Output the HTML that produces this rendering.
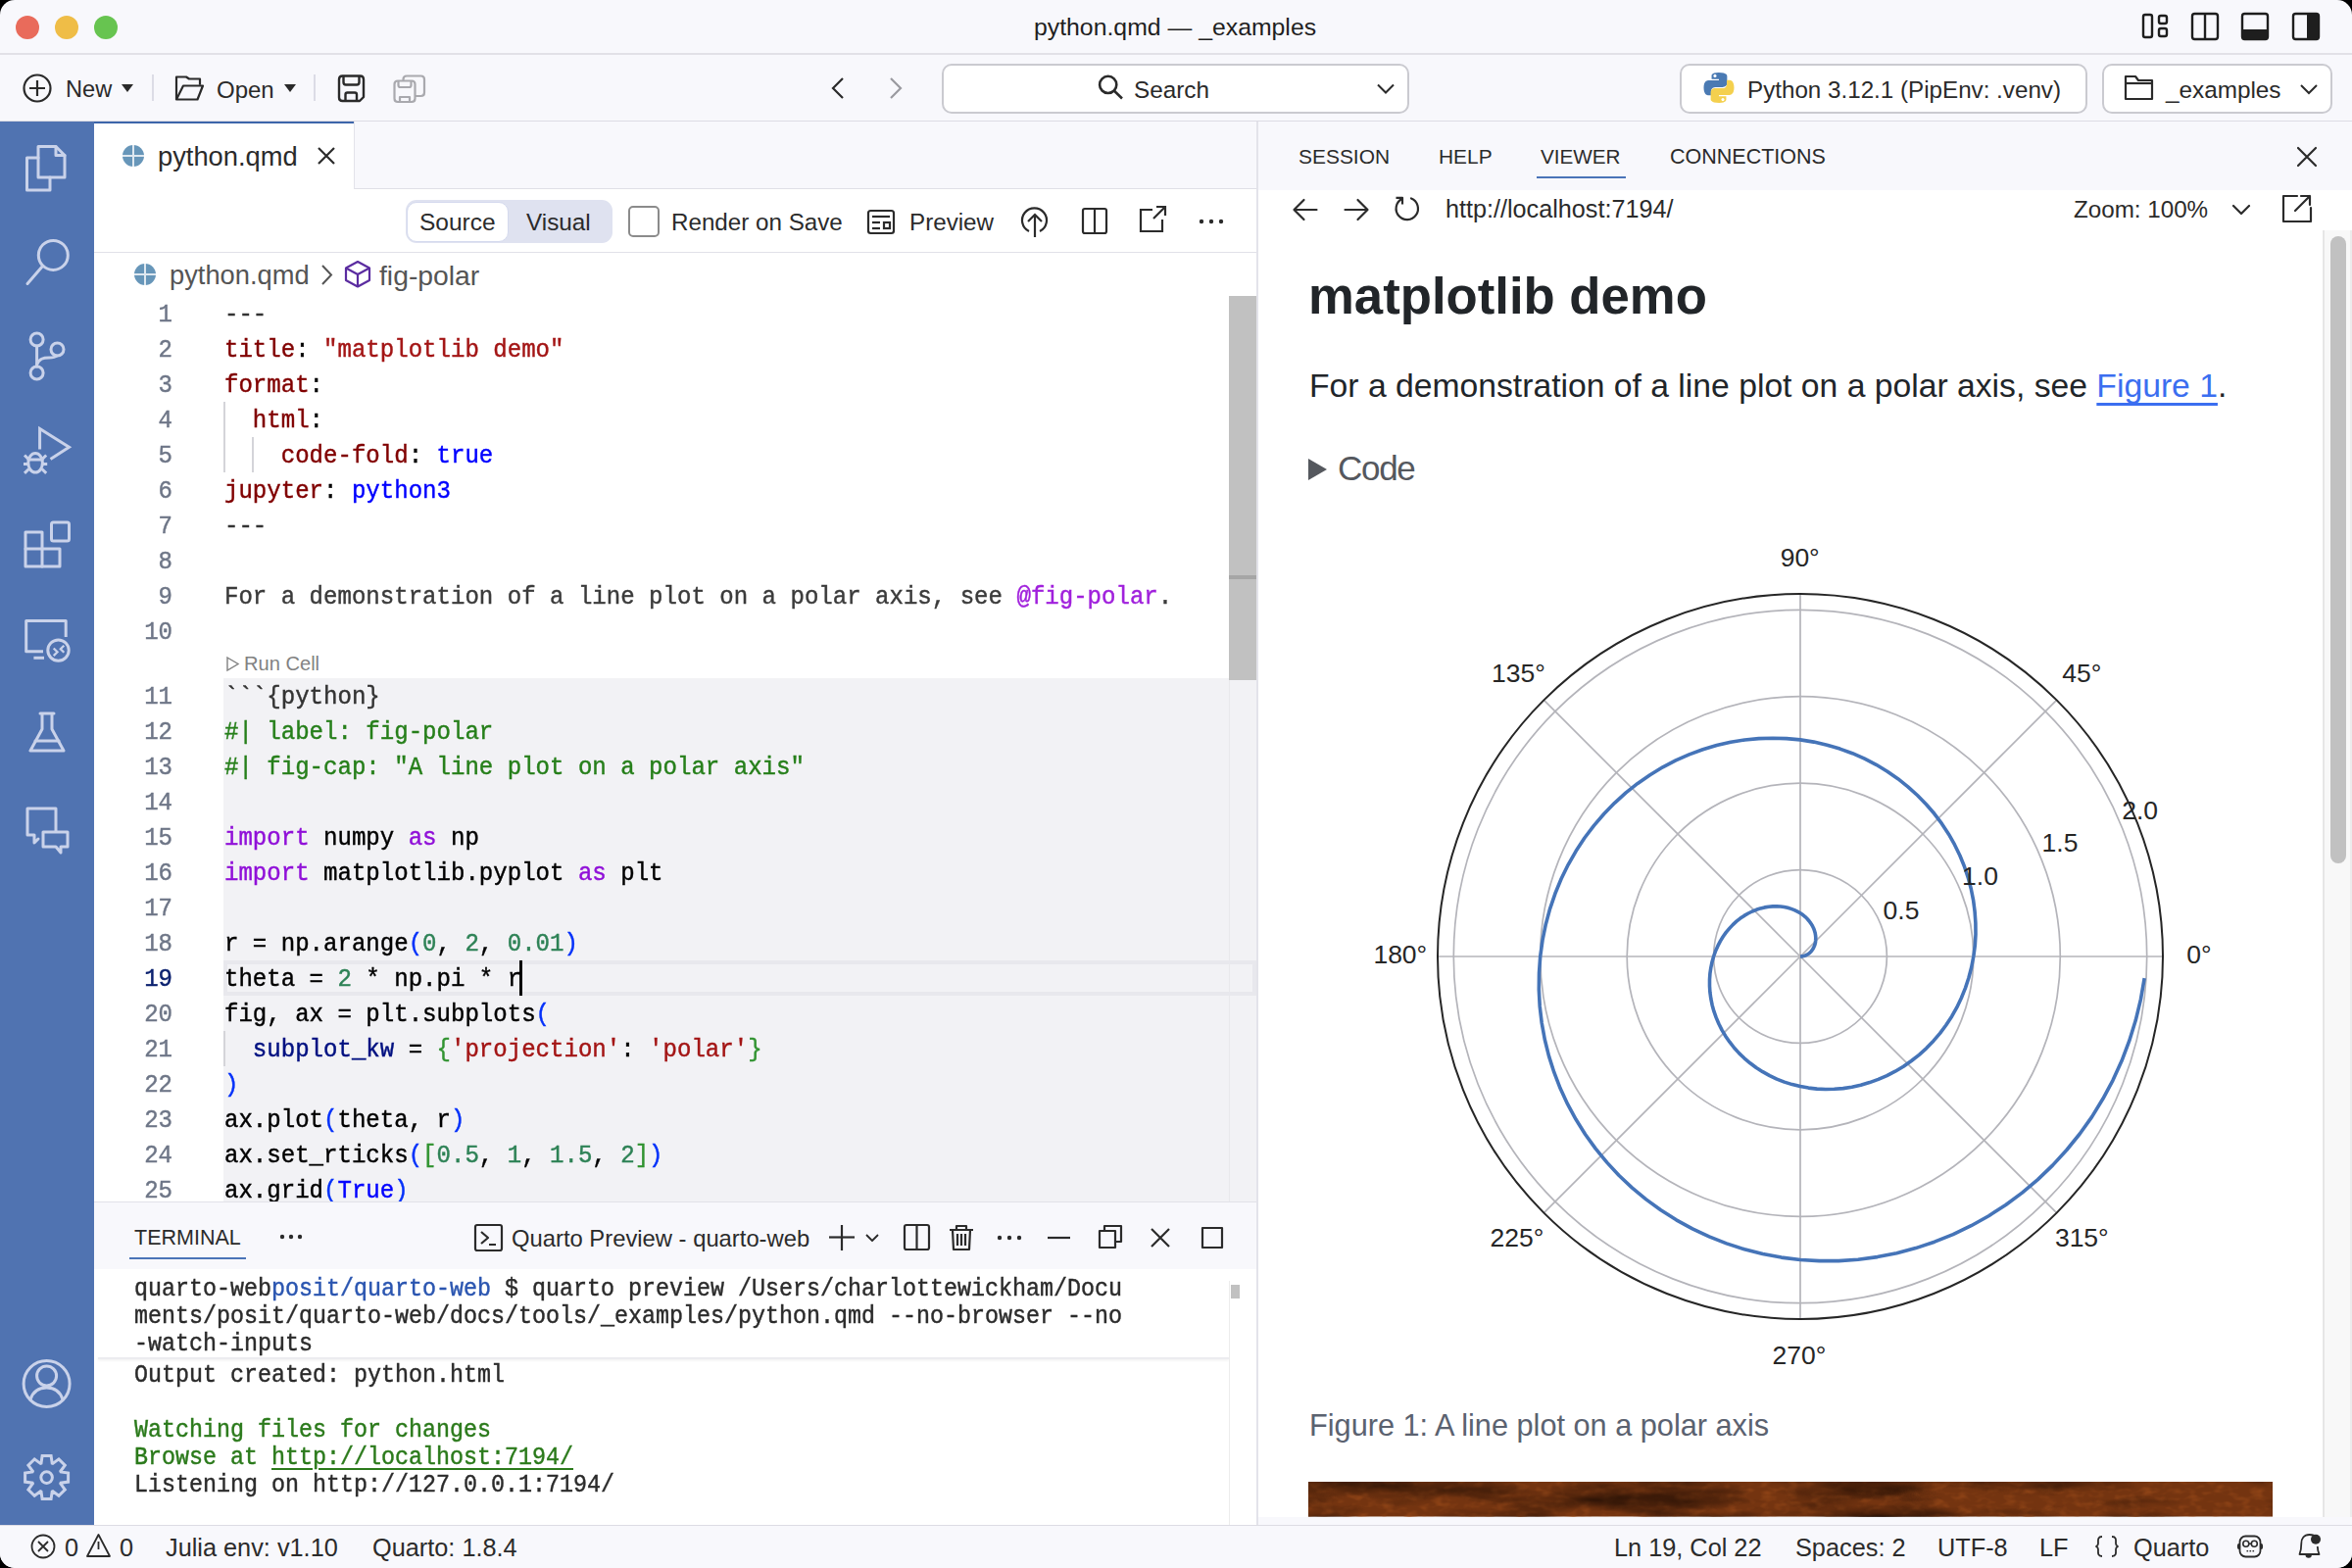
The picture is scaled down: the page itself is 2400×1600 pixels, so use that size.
<!DOCTYPE html><html><head><meta charset="utf-8"><style>
html,body{margin:0;padding:0;}
body{width:2400px;height:1600px;background:#000;position:relative;overflow:hidden;font-family:"Liberation Sans", sans-serif;}
#win{position:absolute;left:0;top:0;width:2400px;height:1600px;border-radius:15px;overflow:hidden;background:#f8f8fc;}
.a{position:absolute;}
.t{position:absolute;white-space:pre;line-height:1;}
svg{position:absolute;overflow:visible;}
.mono{font-family:"Liberation Mono", monospace;-webkit-text-stroke:0.45px currentColor;}
</style></head><body><div id="win">

<div class="a" style="left:0;top:54px;width:2400px;height:2px;background:#e2e1e7"></div>
<div class="a" style="left:16px;top:16px;width:24px;height:24px;border-radius:50%;background:#e96b5b"></div>
<div class="a" style="left:56px;top:16px;width:24px;height:24px;border-radius:50%;background:#efbd47"></div>
<div class="a" style="left:96px;top:16px;width:24px;height:24px;border-radius:50%;background:#67c450"></div>
<div class="t" style="left:1055px;top:16px;font-size:24.8px;color:#1f1f1f">python.qmd — _examples</div>
<svg style="left:0;top:0" width="2400" height="60">
<g fill="none" stroke="#1e1e1e" stroke-width="2.4">
<rect x="2187" y="15" width="9" height="23" rx="2"/><rect x="2203" y="16" width="8" height="8" rx="2"/><rect x="2203" y="29" width="8" height="8" rx="2"/>
<rect x="2237" y="14" width="26" height="26" rx="2.5"/><line x1="2250" y1="14" x2="2250" y2="40"/>
<rect x="2288" y="14" width="26" height="26" rx="2.5"/>
<rect x="2340" y="14" width="26" height="26" rx="2.5"/>
</g>
<rect x="2288" y="30" width="26" height="10" fill="#1e1e1e"/>
<rect x="2354" y="14" width="12" height="26" fill="#1e1e1e"/>
</svg>
<div class="a" style="left:0;top:123px;width:2400px;height:1px;background:#dddce4"></div>
<svg style="left:0;top:55px" width="2400" height="68">
<g fill="none" stroke="#2a2a2a" stroke-width="2.2">
<circle cx="38" cy="35" r="13.5"/><line x1="30" y1="35" x2="46" y2="35"/><line x1="38" y1="27" x2="38" y2="43"/>
</g>
<path d="M124 31 L136 31 L130 39 Z" fill="#2a2a2a"/>
<rect x="155" y="21" width="2" height="27" fill="#dcdce6"/>
<g fill="none" stroke="#2a2a2a" stroke-width="2.2" stroke-linejoin="round">
<path d="M180 46.5 L180 23.5 L190 23.5 L193 25.5 L204 25.5 L204 31.8"/><path d="M180 46.5 L187 32.5 L207 32.5 L201.5 46.5 Z"/>
</g>
<path d="M290 31 L302 31 L296 39 Z" fill="#2a2a2a"/>
<rect x="320" y="21" width="2" height="27" fill="#dcdce6"/>
<g fill="none" stroke="#2a2a2a" stroke-width="2.4" stroke-linejoin="round">
<path d="M349.5 22.5 L367.5 22.5 Q371 22.5 371 26 L371 44 L367 48 L349.5 48 Q346 48 346 44.5 L346 26 Q346 22.5 349.5 22.5 Z"/>
<path d="M350.5 22.5 L350.5 29 Q350.5 31.5 353 31.5 L364 31.5 Q366.5 31.5 366.5 29 L366.5 22.5"/>
<path d="M352.5 48 L352.5 41.5 Q352.5 39.5 354.5 39.5 L362 39.5 Q364 39.5 364 41.5 L364 48"/>
</g>
<g fill="none" stroke="#a9a9ae" stroke-width="2.2" stroke-linejoin="round">
<path d="M406 27.5 L420 27.5 Q423.5 27.5 423.5 31 L423.5 45.5 Q423.5 49 420 49 L406 49 Q402.5 49 402.5 45.5 L402.5 31 Q402.5 27.5 406 27.5 Z"/>
<path d="M406.5 27.5 L406.5 32 Q406.5 34 408.5 34 L417.5 34 Q419.5 34 419.5 32 L419.5 27.5"/><path d="M408 49 L408 44 L418 44 L418 49"/>
<path d="M411.5 27.5 L411.5 26 Q411.5 22.5 415 22.5 L429.5 22.5 Q433 22.5 433 26 L433 39.5 Q433 43 429.5 43 L423.5 43"/>
</g>
<g fill="none" stroke="#2a2a2a" stroke-width="2.2"><path d="M860 25 L850 35 L860 45"/></g>
<g fill="none" stroke="#9a9aa0" stroke-width="2.2"><path d="M909 25 L919 35 L909 45"/></g>
</svg>
<div class="t" style="left:67px;top:80px;font-size:23.6px;color:#2a2a2a">New</div>
<div class="t" style="left:221px;top:80px;font-size:24px;color:#2a2a2a">Open</div>
<div class="a" style="left:961px;top:64.5px;width:477px;height:51px;border:2px solid #cacad0;border-radius:10px;background:#fff;box-sizing:border-box"></div>
<div class="t" style="left:1157px;top:80px;font-size:24.3px;color:#2a2a2a">Search</div>
<div class="a" style="left:1714px;top:64.5px;width:416px;height:51px;border:2px solid #cacad0;border-radius:10px;background:#fff;box-sizing:border-box"></div>
<div class="t" style="left:1783px;top:80px;font-size:24.2px;color:#2a2a2a">Python 3.12.1 (PipEnv: .venv)</div>
<div class="a" style="left:2145px;top:64.5px;width:235px;height:51px;border:2px solid #cacad0;border-radius:10px;background:#fff;box-sizing:border-box"></div>
<div class="t" style="left:2210px;top:80px;font-size:24.3px;color:#2a2a2a">_examples</div>
<svg style="left:0;top:55px" width="2400" height="68">
<g fill="none" stroke="#2a2a2a" stroke-width="2.6"><circle cx="1130.7" cy="31.4" r="8.6"/><line x1="1137" y1="37.8" x2="1145" y2="45.5"/></g>
<g fill="none" stroke="#2a2a2a" stroke-width="2"><path d="M1406 31.5 L1414 39.5 L1422 31.5"/></g>
<g transform="translate(1738.5 19) scale(0.31)">
<path d="M49 0 C24 0 26 11 26 11 L26 22 L50 22 L50 26 L17 26 C17 26 0 24 0 50 C0 76 15 75 15 75 L24 75 L24 63 C24 63 23 48 39 48 L63 48 C63 48 77 48 77 34 L77 12 C77 12 79 0 49 0 Z" fill="#4a7ab3"/>
<path d="M51 100 C76 100 74 89 74 89 L74 78 L50 78 L50 74 L83 74 C83 74 100 76 100 50 C100 24 85 25 85 25 L76 25 L76 37 C76 37 77 52 61 52 L37 52 C37 52 23 52 23 66 L23 88 C23 88 21 100 51 100 Z" fill="#f4d04e"/>
<circle cx="37" cy="11" r="5" fill="#fff"/><circle cx="63" cy="89" r="5" fill="#fff"/>
</g>
<g fill="none" stroke="#2a2a2a" stroke-width="2.2" stroke-linejoin="round">
<path d="M2169 24 L2169 46 L2196 46 L2196 27 L2182 27 L2179 23 L2169 23 Z"/><line x1="2169" y1="30" x2="2196" y2="30"/>
</g>
<g fill="none" stroke="#2a2a2a" stroke-width="2"><path d="M2348 32 L2356 40 L2364 32"/></g>
</svg>
<div class="a" style="left:0;top:124px;width:96px;height:1432px;background:#5073b1"></div>
<svg style="left:0;top:0" width="96" height="1600">
<g fill="none" stroke="#c9d2ea" stroke-width="3" stroke-linejoin="round" stroke-linecap="round">
<path d="M39 149.5 L57 149.5 L66 158.5 L66 181 L39 181 Z"/><path d="M57 149.5 L57 158.5 L66 158.5"/><path d="M39 161 L27.5 161 L27.5 194 L51 194 L51 181"/>
<circle cx="54.3" cy="260.4" r="15"/><line x1="43.5" y1="271.5" x2="28" y2="289.5"/>
<circle cx="37.6" cy="346.5" r="6.5"/><circle cx="37.6" cy="380.5" r="6.5"/><circle cx="58.5" cy="356.5" r="6.5"/>
<line x1="37.6" y1="353" x2="37.6" y2="374"/><path d="M37.6 372 C40 366 44 365 50 365 C55 365 57 364 58 363"/>
<path d="M40.6 458.5 L40.6 437.5 L70.5 456.3 L51.5 468.5" stroke-linecap="butt" stroke-linejoin="miter"/>
<ellipse cx="36.1" cy="472.3" rx="7.3" ry="9.8"/><line x1="29" y1="469" x2="43.2" y2="469"/><path d="M24 473.5 L28.5 473.5 M43.7 473.5 L48.2 473.5 M25 464.5 L29 468.3 M47.2 464.5 L43.2 468.3 M25 482.8 L29.5 478.5 M47.2 482.8 L42.7 478.5" stroke-linecap="butt"/>
<path d="M26 543 L43 543 L43 560 L61 560 L61 578 L26 578 Z"/><line x1="26" y1="560" x2="43" y2="560"/><line x1="43" y1="560" x2="43" y2="578"/><rect x="52.5" y="533" width="18" height="19" rx="2"/>
<path d="M67.2 650 L67.2 633.6 L26.7 633.6 L26.7 664.8 L44 664.8" stroke-linecap="butt"/><line x1="34.4" y1="671.3" x2="45" y2="671.3" stroke-linecap="butt"/><circle cx="59.5" cy="663.6" r="10.7"/><path d="M54.7 661.5 L58.5 665.3 L54.7 669.1 M65.3 658.7 L61.8 662.2 L65.3 665.7" stroke-width="2.3" stroke-linejoin="miter" stroke-linecap="butt"/>
<path d="M41 728 L55 728 M43 728 L43 744 L31 766 L65 766 L53 744 L53 728"/><line x1="36" y1="756" x2="60" y2="756"/>
<path d="M57 848 L57 825 L28 825 L28 852 L35 852 L35 860 L39 856"/><path d="M44 849 L69 849 L69 864 L62 864 L62 870 L57 864 L44 864 Z"/>
<circle cx="47.6" cy="1412" r="23.5"/><circle cx="47.6" cy="1404" r="10"/><path d="M31 1428 C34 1419 40 1416 47.6 1416 C55 1416 61 1419 64 1428"/>
</g>
<g transform="translate(47.6 1507.6)" fill="none" stroke="#c9d2ea" stroke-width="3" stroke-linejoin="round">
<path d="M5.6 -14.5 L4.5 -22.0 L-4.5 -22.0 L-5.6 -14.5 L-6.3 -14.2 L-12.4 -18.7 L-18.7 -12.4 L-14.2 -6.3 L-14.5 -5.6 L-22.0 -4.5 L-22.0 4.5 L-14.5 5.6 L-14.2 6.3 L-18.7 12.4 L-12.4 18.7 L-6.3 14.2 L-5.6 14.5 L-4.5 22.0 L4.5 22.0 L5.6 14.5 L6.3 14.2 L12.4 18.7 L18.7 12.4 L14.2 6.3 L14.5 5.6 L22.0 4.5 L22.0 -4.5 L14.5 -5.6 L14.2 -6.3 L18.7 -12.4 L12.4 -18.7 L6.3 -14.2 Z" stroke-linejoin="miter"/><circle cx="0" cy="0" r="5.8"/>
</g>
</svg>
<div class="a" style="left:96px;top:124px;width:1186px;height:69px;background:#f8f8fc"></div>
<div class="a" style="left:96px;top:192px;width:1186px;height:1px;background:#e0e0e7"></div>
<div class="a" style="left:96px;top:124px;width:265px;height:69px;background:#fff"></div>
<div class="a" style="left:96px;top:124px;width:265px;height:2px;background:#3d66aa"></div>
<div class="a" style="left:361px;top:124px;width:1px;height:69px;background:#e3e3ea"></div>
<div class="t" style="left:161px;top:146px;font-size:27.3px;color:#2b2b2b">python.qmd</div>
<div class="a" style="left:96px;top:258px;width:1186px;height:968px;background:#fff"></div>
<div class="a" style="left:96px;top:193px;width:1186px;height:64px;background:#fff"></div>
<div class="a" style="left:96px;top:257px;width:1186px;height:1px;background:#e1e1e8"></div>
<div class="a" style="left:414px;top:204px;width:211px;height:44px;border-radius:11px;background:#dfe2f0"></div>
<div class="a" style="left:415px;top:206px;width:104px;height:41px;border-radius:10px;background:#fff;border:1.5px solid #d5daee;box-sizing:border-box"></div>
<div class="t" style="left:428px;top:215px;font-size:24.5px;color:#2b2b2b">Source</div>
<div class="t" style="left:537px;top:215px;font-size:24.3px;color:#2b2b2b">Visual</div>
<div class="a" style="left:641px;top:210px;width:32px;height:32px;border-radius:5px;border:2px solid #8b8b8b;box-sizing:border-box;background:#fff"></div>
<div class="t" style="left:685px;top:215px;font-size:24.2px;color:#2b2b2b">Render on Save</div>
<div class="t" style="left:928px;top:215px;font-size:24.2px;color:#2b2b2b">Preview</div>
<svg style="left:0;top:0" width="1290" height="320">
<g fill="none" stroke="#2b2b2b" stroke-width="2.2">
<path d="M325 151 L341 167 M341 151 L325 167"/>
<rect x="886" y="215" width="26" height="23" rx="2.5"/><line x1="890" y1="221" x2="908" y2="221"/><line x1="890" y1="227" x2="898" y2="227"/><line x1="890" y1="233" x2="898" y2="233"/><rect x="902" y="227" width="6" height="6"/>
<path d="M1050 236 A12.5 12.5 0 1 1 1061 236"/><line x1="1056" y1="242" x2="1056" y2="219"/><path d="M1049 226 L1056 219 L1063 226"/>
<rect x="1105" y="213" width="24" height="25" rx="2"/><line x1="1117" y1="213" x2="1117" y2="238"/>
<path d="M1176 214 L1164 214 L1164 236 L1186 236 L1186 224"/><path d="M1177 223 L1189 211 M1180 211 L1189 211 L1189 220"/>
</g>
<g fill="#2b2b2b"><circle cx="1226" cy="226" r="2.2"/><circle cx="1236" cy="226" r="2.2"/><circle cx="1246" cy="226" r="2.2"/></g>
<circle cx="136" cy="159" r="11" fill="#6796b9"/><path d="M125 159 L147 159 M136 148 L136 170" stroke="#dfe8f0" stroke-width="2"/>
<circle cx="148" cy="280" r="11" fill="#6796b9"/><path d="M137 280 L159 280 M148 269 L148 291" stroke="#dfe8f0" stroke-width="2"/>
<path d="M329 271 L338 280.5 L329 290" fill="none" stroke="#555" stroke-width="2"/>
<g fill="none" stroke="#5b2ca0" stroke-width="2.2" stroke-linejoin="round"><path d="M365 267 L377 273.5 L377 286 L365 292.5 L353 286 L353 273.5 Z"/><path d="M353 273.5 L365 280 L377 273.5 M365 280 L365 292.5"/></g>
</svg>
<div class="t" style="left:173px;top:267px;font-size:27.3px;color:#555">python.qmd</div>
<div class="t" style="left:387px;top:267px;font-size:28.3px;color:#555">fig-polar</div>
<div class="a" style="left:228px;top:692px;width:1054px;height:534px;background:#f2f2f5"></div>
<div class="a" style="left:1254px;top:694px;width:1px;height:532px;background:#e9e9ec"></div>
<div class="a" style="left:228px;top:980px;width:1054px;height:36px;border:4px solid #e8e8ed;box-sizing:border-box"></div>
<div class="a" style="left:1254px;top:302px;width:28px;height:392px;background:#c1c1c1"></div>
<div class="a" style="left:1254px;top:587px;width:28px;height:4px;background:#a6a6a6"></div>
<div class="t mono" style="left:96px;width:80px;text-align:right;top:303px;height:36px;line-height:36px;font-size:26.3px;transform:scaleX(0.9148);transform-origin:100% 0;color:#6e7687">1</div>
<div class="t mono" style="left:229px;top:303px;height:36px;line-height:36px;font-size:26.3px;transform:scaleX(0.9148);transform-origin:0 0"><span style="color:#333333">---</span></div>
<div class="t mono" style="left:96px;width:80px;text-align:right;top:339px;height:36px;line-height:36px;font-size:26.3px;transform:scaleX(0.9148);transform-origin:100% 0;color:#6e7687">2</div>
<div class="t mono" style="left:229px;top:339px;height:36px;line-height:36px;font-size:26.3px;transform:scaleX(0.9148);transform-origin:0 0"><span style="color:#800000">title</span><span style="color:#000000">: </span><span style="color:#a31515">&quot;matplotlib demo&quot;</span></div>
<div class="t mono" style="left:96px;width:80px;text-align:right;top:375px;height:36px;line-height:36px;font-size:26.3px;transform:scaleX(0.9148);transform-origin:100% 0;color:#6e7687">3</div>
<div class="t mono" style="left:229px;top:375px;height:36px;line-height:36px;font-size:26.3px;transform:scaleX(0.9148);transform-origin:0 0"><span style="color:#800000">format</span><span style="color:#000000">:</span></div>
<div class="t mono" style="left:96px;width:80px;text-align:right;top:411px;height:36px;line-height:36px;font-size:26.3px;transform:scaleX(0.9148);transform-origin:100% 0;color:#6e7687">4</div>
<div class="t mono" style="left:229px;top:411px;height:36px;line-height:36px;font-size:26.3px;transform:scaleX(0.9148);transform-origin:0 0"><span style="color:#800000">  html</span><span style="color:#000000">:</span></div>
<div class="t mono" style="left:96px;width:80px;text-align:right;top:447px;height:36px;line-height:36px;font-size:26.3px;transform:scaleX(0.9148);transform-origin:100% 0;color:#6e7687">5</div>
<div class="t mono" style="left:229px;top:447px;height:36px;line-height:36px;font-size:26.3px;transform:scaleX(0.9148);transform-origin:0 0"><span style="color:#800000">    code-fold</span><span style="color:#000000">: </span><span style="color:#0000ff">true</span></div>
<div class="t mono" style="left:96px;width:80px;text-align:right;top:483px;height:36px;line-height:36px;font-size:26.3px;transform:scaleX(0.9148);transform-origin:100% 0;color:#6e7687">6</div>
<div class="t mono" style="left:229px;top:483px;height:36px;line-height:36px;font-size:26.3px;transform:scaleX(0.9148);transform-origin:0 0"><span style="color:#800000">jupyter</span><span style="color:#000000">: </span><span style="color:#0000ff">python3</span></div>
<div class="t mono" style="left:96px;width:80px;text-align:right;top:519px;height:36px;line-height:36px;font-size:26.3px;transform:scaleX(0.9148);transform-origin:100% 0;color:#6e7687">7</div>
<div class="t mono" style="left:229px;top:519px;height:36px;line-height:36px;font-size:26.3px;transform:scaleX(0.9148);transform-origin:0 0"><span style="color:#333333">---</span></div>
<div class="t mono" style="left:96px;width:80px;text-align:right;top:555px;height:36px;line-height:36px;font-size:26.3px;transform:scaleX(0.9148);transform-origin:100% 0;color:#6e7687">8</div>
<div class="t mono" style="left:229px;top:555px;height:36px;line-height:36px;font-size:26.3px;transform:scaleX(0.9148);transform-origin:0 0"></div>
<div class="t mono" style="left:96px;width:80px;text-align:right;top:591px;height:36px;line-height:36px;font-size:26.3px;transform:scaleX(0.9148);transform-origin:100% 0;color:#6e7687">9</div>
<div class="t mono" style="left:229px;top:591px;height:36px;line-height:36px;font-size:26.3px;transform:scaleX(0.9148);transform-origin:0 0"><span style="color:#3b3b3b">For a demonstration of a line plot on a polar axis, see </span><span style="color:#a020dc">@fig-polar</span><span style="color:#3b3b3b">.</span></div>
<div class="t mono" style="left:96px;width:80px;text-align:right;top:627px;height:36px;line-height:36px;font-size:26.3px;transform:scaleX(0.9148);transform-origin:100% 0;color:#6e7687">10</div>
<div class="t mono" style="left:229px;top:627px;height:36px;line-height:36px;font-size:26.3px;transform:scaleX(0.9148);transform-origin:0 0"></div>
<div class="t mono" style="left:96px;width:80px;text-align:right;top:693px;height:36px;line-height:36px;font-size:26.3px;transform:scaleX(0.9148);transform-origin:100% 0;color:#6e7687">11</div>
<div class="t mono" style="left:229px;top:693px;height:36px;line-height:36px;font-size:26.3px;transform:scaleX(0.9148);transform-origin:0 0"><span style="color:#333333">```{python}</span></div>
<div class="t mono" style="left:96px;width:80px;text-align:right;top:729px;height:36px;line-height:36px;font-size:26.3px;transform:scaleX(0.9148);transform-origin:100% 0;color:#6e7687">12</div>
<div class="t mono" style="left:229px;top:729px;height:36px;line-height:36px;font-size:26.3px;transform:scaleX(0.9148);transform-origin:0 0"><span style="color:#267f1a">#| label: fig-polar</span></div>
<div class="t mono" style="left:96px;width:80px;text-align:right;top:765px;height:36px;line-height:36px;font-size:26.3px;transform:scaleX(0.9148);transform-origin:100% 0;color:#6e7687">13</div>
<div class="t mono" style="left:229px;top:765px;height:36px;line-height:36px;font-size:26.3px;transform:scaleX(0.9148);transform-origin:0 0"><span style="color:#267f1a">#| fig-cap: &quot;A line plot on a polar axis&quot;</span></div>
<div class="t mono" style="left:96px;width:80px;text-align:right;top:801px;height:36px;line-height:36px;font-size:26.3px;transform:scaleX(0.9148);transform-origin:100% 0;color:#6e7687">14</div>
<div class="t mono" style="left:229px;top:801px;height:36px;line-height:36px;font-size:26.3px;transform:scaleX(0.9148);transform-origin:0 0"></div>
<div class="t mono" style="left:96px;width:80px;text-align:right;top:837px;height:36px;line-height:36px;font-size:26.3px;transform:scaleX(0.9148);transform-origin:100% 0;color:#6e7687">15</div>
<div class="t mono" style="left:229px;top:837px;height:36px;line-height:36px;font-size:26.3px;transform:scaleX(0.9148);transform-origin:0 0"><span style="color:#9010d8">import</span><span style="color:#000000"> numpy </span><span style="color:#9010d8">as</span><span style="color:#000000"> np</span></div>
<div class="t mono" style="left:96px;width:80px;text-align:right;top:873px;height:36px;line-height:36px;font-size:26.3px;transform:scaleX(0.9148);transform-origin:100% 0;color:#6e7687">16</div>
<div class="t mono" style="left:229px;top:873px;height:36px;line-height:36px;font-size:26.3px;transform:scaleX(0.9148);transform-origin:0 0"><span style="color:#9010d8">import</span><span style="color:#000000"> matplotlib.pyplot </span><span style="color:#9010d8">as</span><span style="color:#000000"> plt</span></div>
<div class="t mono" style="left:96px;width:80px;text-align:right;top:909px;height:36px;line-height:36px;font-size:26.3px;transform:scaleX(0.9148);transform-origin:100% 0;color:#6e7687">17</div>
<div class="t mono" style="left:229px;top:909px;height:36px;line-height:36px;font-size:26.3px;transform:scaleX(0.9148);transform-origin:0 0"></div>
<div class="t mono" style="left:96px;width:80px;text-align:right;top:945px;height:36px;line-height:36px;font-size:26.3px;transform:scaleX(0.9148);transform-origin:100% 0;color:#6e7687">18</div>
<div class="t mono" style="left:229px;top:945px;height:36px;line-height:36px;font-size:26.3px;transform:scaleX(0.9148);transform-origin:0 0"><span style="color:#000000">r = np.arange</span><span style="color:#0431fa">(</span><span style="color:#2e8256">0</span><span style="color:#000000">, </span><span style="color:#2e8256">2</span><span style="color:#000000">, </span><span style="color:#2e8256">0.01</span><span style="color:#0431fa">)</span></div>
<div class="t mono" style="left:96px;width:80px;text-align:right;top:981px;height:36px;line-height:36px;font-size:26.3px;transform:scaleX(0.9148);transform-origin:100% 0;color:#0b216f">19</div>
<div class="t mono" style="left:229px;top:981px;height:36px;line-height:36px;font-size:26.3px;transform:scaleX(0.9148);transform-origin:0 0"><span style="color:#000000">theta = </span><span style="color:#2e8256">2</span><span style="color:#000000"> * np.pi * r</span></div>
<div class="t mono" style="left:96px;width:80px;text-align:right;top:1017px;height:36px;line-height:36px;font-size:26.3px;transform:scaleX(0.9148);transform-origin:100% 0;color:#6e7687">20</div>
<div class="t mono" style="left:229px;top:1017px;height:36px;line-height:36px;font-size:26.3px;transform:scaleX(0.9148);transform-origin:0 0"><span style="color:#000000">fig, ax = plt.subplots</span><span style="color:#0431fa">(</span></div>
<div class="t mono" style="left:96px;width:80px;text-align:right;top:1053px;height:36px;line-height:36px;font-size:26.3px;transform:scaleX(0.9148);transform-origin:100% 0;color:#6e7687">21</div>
<div class="t mono" style="left:229px;top:1053px;height:36px;line-height:36px;font-size:26.3px;transform:scaleX(0.9148);transform-origin:0 0"><span style="color:#000000">  </span><span style="color:#001080">subplot_kw</span><span style="color:#000000"> = </span><span style="color:#319331">{</span><span style="color:#a31515">&#x27;projection&#x27;</span><span style="color:#000000">: </span><span style="color:#a31515">&#x27;polar&#x27;</span><span style="color:#319331">}</span></div>
<div class="t mono" style="left:96px;width:80px;text-align:right;top:1089px;height:36px;line-height:36px;font-size:26.3px;transform:scaleX(0.9148);transform-origin:100% 0;color:#6e7687">22</div>
<div class="t mono" style="left:229px;top:1089px;height:36px;line-height:36px;font-size:26.3px;transform:scaleX(0.9148);transform-origin:0 0"><span style="color:#0431fa">)</span></div>
<div class="t mono" style="left:96px;width:80px;text-align:right;top:1125px;height:36px;line-height:36px;font-size:26.3px;transform:scaleX(0.9148);transform-origin:100% 0;color:#6e7687">23</div>
<div class="t mono" style="left:229px;top:1125px;height:36px;line-height:36px;font-size:26.3px;transform:scaleX(0.9148);transform-origin:0 0"><span style="color:#000000">ax.plot</span><span style="color:#0431fa">(</span><span style="color:#000000">theta, r</span><span style="color:#0431fa">)</span></div>
<div class="t mono" style="left:96px;width:80px;text-align:right;top:1161px;height:36px;line-height:36px;font-size:26.3px;transform:scaleX(0.9148);transform-origin:100% 0;color:#6e7687">24</div>
<div class="t mono" style="left:229px;top:1161px;height:36px;line-height:36px;font-size:26.3px;transform:scaleX(0.9148);transform-origin:0 0"><span style="color:#000000">ax.set_rticks</span><span style="color:#0431fa">(</span><span style="color:#319331">[</span><span style="color:#2e8256">0.5</span><span style="color:#000000">, </span><span style="color:#2e8256">1</span><span style="color:#000000">, </span><span style="color:#2e8256">1.5</span><span style="color:#000000">, </span><span style="color:#2e8256">2</span><span style="color:#319331">]</span><span style="color:#0431fa">)</span></div>
<div class="t mono" style="left:96px;width:80px;text-align:right;top:1197px;height:36px;line-height:36px;font-size:26.3px;transform:scaleX(0.9148);transform-origin:100% 0;color:#6e7687">25</div>
<div class="t mono" style="left:229px;top:1197px;height:36px;line-height:36px;font-size:26.3px;transform:scaleX(0.9148);transform-origin:0 0"><span style="color:#000000">ax.grid</span><span style="color:#0431fa">(</span><span style="color:#0000ff">True</span><span style="color:#0431fa">)</span></div>
<div class="a" style="left:228px;top:410px;width:2px;height:72px;background:#d4d4d9"></div>
<div class="a" style="left:257px;top:446px;width:2px;height:36px;background:#d4d4d9"></div>
<div class="a" style="left:228px;top:1052px;width:2px;height:36px;background:#d4d4d9"></div>
<div class="a" style="left:530px;top:980px;width:3px;height:36px;background:#000"></div>
<svg style="left:0;top:0" width="300" height="700"><path d="M232 671 L243 677.5 L232 684 Z" fill="none" stroke="#808080" stroke-width="1.4"/></svg>
<div class="t" style="left:249px;top:667px;font-size:20.1px;color:#828282">Run Cell</div>
<div class="a" style="left:96px;top:1225.5px;width:1186px;height:2px;background:#e2e2e8"></div>
<div class="a" style="left:96px;top:1227px;width:1186px;height:68px;background:#f8f8fc"></div>
<div class="a" style="left:96px;top:1295px;width:1186px;height:261px;background:#fff"></div>
<div class="t" style="left:137px;top:1252.5px;font-size:21.5px;color:#2b2b2b">TERMINAL</div>
<div class="a" style="left:132px;top:1283px;width:119px;height:2px;background:#4a74b8"></div>
<div class="t" style="left:522px;top:1252px;font-size:23.8px;color:#2b2b2b">Quarto Preview - quarto-web</div>
<svg style="left:0;top:0" width="1290" height="1600">
<g fill="#2b2b2b"><circle cx="288" cy="1262" r="2.2"/><circle cx="297" cy="1262" r="2.2"/><circle cx="306" cy="1262" r="2.2"/>
<circle cx="1020" cy="1263" r="2.2"/><circle cx="1030" cy="1263" r="2.2"/><circle cx="1040" cy="1263" r="2.2"/></g>
<g fill="none" stroke="#2b2b2b" stroke-width="2.2" stroke-linejoin="round">
<rect x="485" y="1250" width="27" height="26" rx="2"/><path d="M491 1257 L498 1263 L491 1269 M499 1270 L506 1270"/>
<line x1="846" y1="1262.5" x2="872" y2="1262.5"/><line x1="859" y1="1250" x2="859" y2="1276"/>
<path d="M884 1260 L890 1266 L896 1260" stroke-width="1.8"/>
<rect x="923" y="1250" width="25" height="25" rx="2"/><line x1="935.5" y1="1250" x2="935.5" y2="1275"/>
<path d="M969 1255 L993 1255 M976 1255 L976 1251 L986 1251 L986 1255 M972 1255 L973 1275 L989 1275 L990 1255 M977 1259 L977 1271 M981 1259 L981 1271 M985 1259 L985 1271"/>
<line x1="1069" y1="1263" x2="1092" y2="1263"/>
<rect x="1122" y="1256" width="16" height="17"/><path d="M1127 1256 L1127 1251 L1144 1251 L1144 1267 L1138 1267"/>
<path d="M1175 1254 L1193 1272 M1193 1254 L1175 1272"/>
<rect x="1227" y="1253" width="20" height="20"/>
</g>
</svg>
<div class="t mono" style="left:137px;top:1300.7px;height:28px;line-height:28px;font-size:26px;transform:scaleX(0.8973);transform-origin:0 0"><span style="color:#2b2b2b">quarto-web</span><span style="color:#2a55b0">posit/quarto-web</span><span style="color:#2b2b2b"> $ quarto preview /Users/charlottewickham/Docu</span></div>
<div class="t mono" style="left:137px;top:1329.0px;height:28px;line-height:28px;font-size:26px;transform:scaleX(0.8973);transform-origin:0 0"><span style="color:#2b2b2b">ments/posit/quarto-web/docs/tools/_examples/python.qmd --no-browser --no</span></div>
<div class="t mono" style="left:137px;top:1356.9px;height:28px;line-height:28px;font-size:26px;transform:scaleX(0.8973);transform-origin:0 0"><span style="color:#2b2b2b">-watch-inputs</span></div>
<div class="t mono" style="left:137px;top:1388.8px;height:28px;line-height:28px;font-size:26px;transform:scaleX(0.8973);transform-origin:0 0"><span style="color:#2b2b2b">Output created: python.html</span></div>
<div class="t mono" style="left:137px;top:1444.8px;height:28px;line-height:28px;font-size:26px;transform:scaleX(0.8973);transform-origin:0 0"><span style="color:#2b7a1b">Watching files for changes</span></div>
<div class="t mono" style="left:137px;top:1472.7px;height:28px;line-height:28px;font-size:26px;transform:scaleX(0.8973);transform-origin:0 0"><span style="color:#2b7a1b">Browse at </span><span style="color:#2b7a1b;text-decoration:underline;text-decoration-thickness:1.5px;text-underline-offset:4px">http://localhost:7194/</span></div>
<div class="t mono" style="left:137px;top:1500.6px;height:28px;line-height:28px;font-size:26px;transform:scaleX(0.8973);transform-origin:0 0"><span style="color:#2b2b2b">Listening on http://127.0.0.1:7194/</span></div>
<div class="a" style="left:100px;top:1385px;width:1154px;height:2px;background:#ececf0;box-shadow:0 1px 3px rgba(0,0,0,0.08)"></div>
<div class="a" style="left:1254px;top:1307px;width:1px;height:249px;background:#ececec"></div>
<div class="a" style="left:1256px;top:1311px;width:9px;height:14px;background:#c1c1c1"></div>
<div class="a" style="left:1282px;top:124px;width:2px;height:1432px;background:#e3e3ea"></div>
<div class="a" style="left:1284px;top:124px;width:1116px;height:70px;background:#f8f8fc"></div>
<div class="a" style="left:1284px;top:194px;width:1116px;height:1354px;background:#fff"></div>
<div class="t" style="left:1325px;top:149.5px;font-size:20.94px;color:#2b2b2b">SESSION</div>
<div class="t" style="left:1468px;top:149.5px;font-size:20.9px;color:#2b2b2b">HELP</div>
<div class="t" style="left:1572px;top:149.5px;font-size:20.68px;color:#2b2b2b">VIEWER</div>
<div class="t" style="left:1704px;top:149.5px;font-size:21.5px;color:#2b2b2b">CONNECTIONS</div>
<div class="a" style="left:1568px;top:180px;width:91px;height:2px;background:#4a74b8"></div>
<div class="t" style="left:1475px;top:201px;font-size:25.2px;color:#2b2b2b">http://localhost:7194/</div>
<div class="t" style="left:2116px;top:202px;font-size:24.2px;color:#2b2b2b">Zoom: 100%</div>
<svg style="left:0;top:0" width="2400" height="260">
<g fill="none" stroke="#2b2b2b" stroke-width="2.2" stroke-linecap="round" stroke-linejoin="round">
<path d="M2345 151 L2363 169 M2363 151 L2345 169"/>
<path d="M1321 214 L1343.5 214 M1330.5 204 L1320.5 214 L1330.5 224"/>
<path d="M1372.5 214 L1395 214 M1385.5 204 L1395.5 214 L1385.5 224"/>
<path d="M1440 202.5 A11.2 11.2 0 1 1 1430.5 203"/><path d="M1424.5 201.8 L1431 201.8 L1431 208.5" stroke-linecap="butt"/>
<path d="M2279 210 L2287 218 L2295 210"/>
<path d="M2344 200 L2330 200 L2330 226 L2358 226 L2358 212"/><path d="M2342 215 L2357 200 M2348 200 L2357 200 L2357 209"/>
</g>
</svg>
<div class="a" style="left:2370px;top:235px;width:30px;height:1313px;background:#f8f8f8;border-left:2px solid #e6e6e6;border-right:2px solid #ececec;box-sizing:border-box"></div>
<div class="a" style="left:2378px;top:241px;width:16px;height:640px;border-radius:8px;background:#c1c1c1"></div>
<div class="t" style="left:1335px;top:275.5px;font-size:52.7px;font-weight:bold;color:#212529">matplotlib demo</div>
<div class="t" style="left:1336px;top:376.5px;font-size:33.7px;color:#212529">For a demonstration of a line plot on a polar axis, see <span style="color:#3b6ef0;text-decoration:underline;text-decoration-thickness:2.5px;text-underline-offset:6px;text-decoration-skip-ink:none">Figure 1</span>.</div>
<svg style="left:0;top:0" width="2400" height="600"><path d="M1335 468 L1354 479 L1335 490 Z" fill="#55585e"/></svg>
<div class="t" style="left:1365px;top:460px;font-size:35px;letter-spacing:-1.3px;color:#55585e">Code</div>
<svg style="left:0;top:0" width="2400" height="1600">
<g fill="none" stroke="#b4b4ba" stroke-width="1.7">
<circle cx="1837" cy="976" r="88.4"/>
<circle cx="1837" cy="976" r="176.8"/>
<circle cx="1837" cy="976" r="265.3"/>
<circle cx="1837" cy="976" r="353.7"/>
<line x1="1837" y1="976" x2="2207.0" y2="976.0"/>
<line x1="1837" y1="976" x2="2098.6" y2="714.4"/>
<line x1="1837" y1="976" x2="1837.0" y2="606.0"/>
<line x1="1837" y1="976" x2="1575.4" y2="714.4"/>
<line x1="1837" y1="976" x2="1467.0" y2="976.0"/>
<line x1="1837" y1="976" x2="1575.4" y2="1237.6"/>
<line x1="1837" y1="976" x2="1837.0" y2="1346.0"/>
<line x1="1837" y1="976" x2="2098.6" y2="1237.6"/>
</g>
<path d="M1837.0 976.0 L1838.8 975.9 L1840.5 975.6 L1842.2 975.0 L1843.9 974.2 L1845.4 973.3 L1846.9 972.1 L1848.2 970.7 L1849.4 969.2 L1850.4 967.5 L1851.3 965.6 L1852.0 963.6 L1852.5 961.5 L1852.7 959.2 L1852.8 956.9 L1852.6 954.5 L1852.2 952.1 L1851.5 949.7 L1850.6 947.2 L1849.4 944.8 L1847.9 942.4 L1846.2 940.0 L1844.3 937.8 L1842.1 935.6 L1839.7 933.6 L1837.0 931.8 L1834.1 930.1 L1831.0 928.6 L1827.7 927.4 L1824.2 926.3 L1820.6 925.5 L1816.8 925.0 L1812.9 924.8 L1808.9 924.9 L1804.8 925.2 L1800.6 925.9 L1796.4 926.9 L1792.2 928.3 L1788.0 930.0 L1783.9 932.0 L1779.8 934.4 L1775.8 937.1 L1771.9 940.2 L1768.2 943.6 L1764.7 947.4 L1761.3 951.4 L1758.2 955.8 L1755.4 960.4 L1752.8 965.4 L1750.5 970.6 L1748.6 976.0 L1747.0 981.7 L1745.8 987.5 L1744.9 993.6 L1744.5 999.7 L1744.5 1006.1 L1744.9 1012.5 L1745.8 1018.9 L1747.1 1025.4 L1748.9 1031.9 L1751.2 1038.4 L1753.9 1044.8 L1757.1 1051.1 L1760.7 1057.2 L1764.9 1063.2 L1769.4 1069.0 L1774.5 1074.6 L1779.9 1079.8 L1785.8 1084.8 L1792.1 1089.5 L1798.7 1093.7 L1805.8 1097.6 L1813.1 1101.1 L1820.8 1104.1 L1828.8 1106.6 L1837.0 1108.6 L1845.4 1110.1 L1854.1 1111.1 L1862.8 1111.5 L1871.7 1111.3 L1880.7 1110.6 L1889.7 1109.2 L1898.7 1107.2 L1907.7 1104.6 L1916.6 1101.4 L1925.4 1097.6 L1933.9 1093.2 L1942.3 1088.2 L1950.4 1082.5 L1958.3 1076.3 L1965.8 1069.6 L1972.9 1062.2 L1979.6 1054.4 L1985.8 1046.0 L1991.6 1037.2 L1996.8 1027.9 L2001.4 1018.2 L2005.5 1008.1 L2008.9 997.7 L2011.7 987.0 L2013.8 976.0 L2015.3 964.8 L2016.0 953.4 L2015.9 941.9 L2015.1 930.3 L2013.6 918.6 L2011.3 907.0 L2008.2 895.4 L2004.4 884.0 L1999.8 872.7 L1994.4 861.7 L1988.3 850.9 L1981.4 840.4 L1973.8 830.3 L1965.5 820.7 L1956.5 811.5 L1946.9 802.8 L1936.7 794.7 L1925.9 787.2 L1914.5 780.3 L1902.6 774.2 L1890.2 768.7 L1877.4 764.1 L1864.3 760.2 L1850.8 757.1 L1837.0 754.9 L1823.0 753.6 L1808.9 753.2 L1794.6 753.6 L1780.3 755.0 L1766.0 757.3 L1751.7 760.6 L1737.6 764.8 L1723.7 769.9 L1710.0 775.9 L1696.7 782.8 L1683.7 790.7 L1671.1 799.4 L1659.1 808.9 L1647.6 819.3 L1636.7 830.5 L1626.5 842.4 L1616.9 855.0 L1608.2 868.3 L1600.2 882.3 L1593.1 896.8 L1586.9 911.8 L1581.6 927.3 L1577.3 943.2 L1574.0 959.5 L1571.7 976.0 L1570.5 992.8 L1570.3 1009.7 L1571.2 1026.7 L1573.2 1043.7 L1576.3 1060.7 L1580.5 1077.6 L1585.8 1094.2 L1592.1 1110.6 L1599.6 1126.7 L1608.1 1142.3 L1617.6 1157.5 L1628.2 1172.1 L1639.7 1186.1 L1652.1 1199.5 L1665.5 1212.1 L1679.7 1223.9 L1694.7 1234.8 L1710.5 1244.8 L1727.0 1253.9 L1744.1 1261.9 L1761.8 1268.9 L1780.0 1274.8 L1798.7 1279.5 L1817.7 1283.1 L1837.0 1285.5 L1856.5 1286.6 L1876.2 1286.6 L1896.0 1285.2 L1915.7 1282.6 L1935.4 1278.7 L1954.8 1273.6 L1974.0 1267.2 L1992.9 1259.6 L2011.4 1250.7 L2029.3 1240.7 L2046.7 1229.5 L2063.4 1217.1 L2079.4 1203.6 L2094.5 1189.1 L2108.8 1173.5 L2122.2 1157.0 L2134.6 1139.6 L2145.8 1121.3 L2156.0 1102.3 L2165.0 1082.6 L2172.7 1062.2 L2179.2 1041.3 L2184.4 1019.9 L2188.2 998.1" fill="none" stroke="#4574b8" stroke-width="3.6" stroke-linejoin="round"/>
<circle cx="1837" cy="976" r="370" fill="none" stroke="#262626" stroke-width="2"/>
</svg>
<div class="t" style="left:1836.7px;top:568.6px;font-size:26.5px;color:#262626;transform:translate(-50%,-50%)">90°</div>
<div class="t" style="left:1549.4px;top:687px;font-size:26.5px;color:#262626;transform:translate(-50%,-50%)">135°</div>
<div class="t" style="left:2124.4px;top:687px;font-size:26.5px;color:#262626;transform:translate(-50%,-50%)">45°</div>
<div class="t" style="left:1428.8px;top:974.4px;font-size:26.5px;color:#262626;transform:translate(-50%,-50%)">180°</div>
<div class="t" style="left:2244px;top:974.4px;font-size:26.5px;color:#262626;transform:translate(-50%,-50%)">0°</div>
<div class="t" style="left:1548px;top:1263px;font-size:26.5px;color:#262626;transform:translate(-50%,-50%)">225°</div>
<div class="t" style="left:2124.3px;top:1263px;font-size:26.5px;color:#262626;transform:translate(-50%,-50%)">315°</div>
<div class="t" style="left:1836px;top:1383px;font-size:26.5px;color:#262626;transform:translate(-50%,-50%)">270°</div>
<div class="t" style="left:1940px;top:928.5px;font-size:26.5px;color:#262626;transform:translate(-50%,-50%)">0.5</div>
<div class="t" style="left:2020.5px;top:894px;font-size:26.5px;color:#262626;transform:translate(-50%,-50%)">1.0</div>
<div class="t" style="left:2102px;top:860.4px;font-size:26.5px;color:#262626;transform:translate(-50%,-50%)">1.5</div>
<div class="t" style="left:2183.6px;top:827px;font-size:26.5px;color:#262626;transform:translate(-50%,-50%)">2.0</div>
<div class="t" style="left:1336px;top:1440px;font-size:30.7px;color:#5b6270">Figure 1: A line plot on a polar axis</div>
<svg style="left:1335px;top:1512px" width="984" height="35.5">
<defs>
<filter id="tx" x="0" y="0" width="100%" height="100%" color-interpolation-filters="sRGB">
<feTurbulence type="fractalNoise" baseFrequency="0.006 0.03" numOctaves="4" seed="7" result="n"/>
<feColorMatrix in="n" type="matrix" values="0 0 0 0 0.09  0 0 0 0 0.035  0 0 0 0 0.01  2.2 0 0 0 -0.95"/>
</filter>
<filter id="tx2" x="0" y="0" width="100%" height="100%" color-interpolation-filters="sRGB">
<feTurbulence type="fractalNoise" baseFrequency="0.08 0.15" numOctaves="2" seed="11" result="n"/>
<feColorMatrix in="n" type="matrix" values="0 0 0 0 0.62  0 0 0 0 0.3  0 0 0 0 0.1  0 1.6 0 0 -0.75"/>
</filter>
</defs>
<rect width="984" height="35.5" fill="#743410"/>
<rect width="984" height="35.5" filter="url(#tx2)"/>
<rect width="984" height="35.5" filter="url(#tx)"/>
</svg>
<div class="a" style="left:0;top:1556px;width:2400px;height:44px;background:#f8f8fc;border-top:1px solid #dddce4;box-sizing:border-box"></div>
<div class="t" style="left:66px;top:1567px;font-size:25.3px;color:#2b2b2b">0</div>
<div class="t" style="left:122px;top:1567px;font-size:25.3px;color:#2b2b2b">0</div>
<div class="t" style="left:169px;top:1567px;font-size:25.3px;color:#2b2b2b">Julia env: v1.10</div>
<div class="t" style="left:380px;top:1567px;font-size:25.3px;color:#2b2b2b">Quarto: 1.8.4</div>
<div class="t" style="left:1647px;top:1567px;font-size:25.3px;color:#2b2b2b">Ln 19, Col 22</div>
<div class="t" style="left:1832px;top:1567px;font-size:25.3px;color:#2b2b2b">Spaces: 2</div>
<div class="t" style="left:1977px;top:1567px;font-size:25.3px;color:#2b2b2b">UTF-8</div>
<div class="t" style="left:2081px;top:1567px;font-size:25.3px;color:#2b2b2b">LF</div>
<div class="t" style="left:2177px;top:1567px;font-size:25.3px;color:#2b2b2b">Quarto</div>
<svg style="left:0;top:1556px" width="2400" height="44">
<g fill="none" stroke="#2b2b2b" stroke-width="1.8" stroke-linejoin="round">
<circle cx="44" cy="22" r="11.5"/><path d="M39 17 L49 27 M49 17 L39 27"/>
<path d="M100.5 10 L112 32 L89 32 Z"/><line x1="100.5" y1="17" x2="100.5" y2="25"/>
<path d="M2145 12 C2140 12 2141 16 2141 19 C2141 21 2139 22 2139 22 C2139 22 2141 23 2141 25 C2141 28 2140 32 2145 32"/>
<path d="M2155 12 C2160 12 2159 16 2159 19 C2159 21 2161 22 2161 22 C2161 22 2159 23 2159 25 C2159 28 2160 32 2155 32"/>
<rect x="2285.5" y="11.5" width="21" height="21" rx="6"/><circle cx="2291.8" cy="19.2" r="3" stroke-width="1.6"/><circle cx="2300.3" cy="19.2" r="3" stroke-width="1.6"/><line x1="2294.8" y1="19.2" x2="2297.3" y2="19.2" stroke-width="1.4"/>
<path d="M2363 12.5 C2362 10.5 2359.5 10 2356.5 10 C2351 10 2348.3 14 2348.3 19 C2348.3 24 2347.5 27.5 2346.5 30 L2366.5 30 C2365.5 27.5 2364.8 25 2364.8 22"/>
</g>
<ellipse cx="2284.5" cy="22" rx="1.6" ry="3" fill="#2b2b2b"/><ellipse cx="2307.5" cy="22" rx="1.6" ry="3" fill="#2b2b2b"/>
<g fill="#2b2b2b"><rect x="2292.5" y="26" width="1.6" height="1.4"/><rect x="2295.5" y="26" width="1.6" height="1.4"/><rect x="2298.5" y="26" width="1.6" height="1.4"/></g>
<path d="M2352.5 30.5 A3.2 3.2 0 0 0 2358.9 30.5 Z" fill="#2b2b2b"/>
<circle cx="2363" cy="14.8" r="5" fill="#2b2b2b"/><g>
</svg>
</div></body></html>
